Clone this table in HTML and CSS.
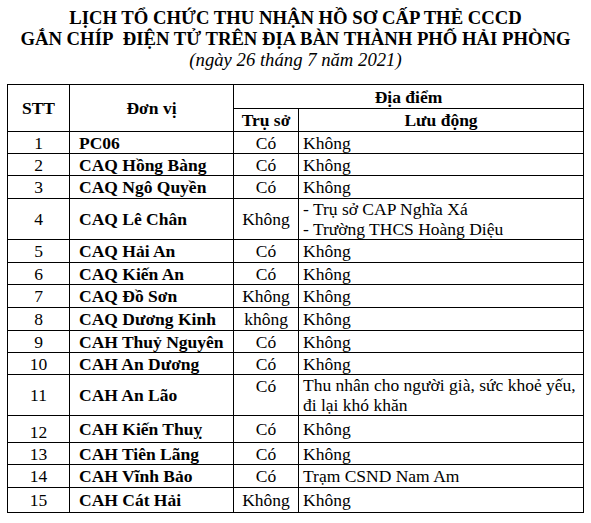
FILE: index.html
```html
<!DOCTYPE html>
<html lang="vi">
<head>
<meta charset="utf-8">
<title>Lịch tổ chức thu nhận hồ sơ cấp thẻ CCCD</title>
<link rel="stylesheet" href="styles.css">
</head>
<body>
<div class="heading">
  <div class="title">LỊCH TỔ CHỨC THU NHẬN HỒ SƠ CẤP THẺ CCCD</div>
  <div class="title">GẮN CHÍP&nbsp; ĐIỆN TỬ TRÊN ĐỊA BÀN THÀNH PHỐ HẢI PHÒNG</div>
  <div class="date">(ngày 26 tháng 7 năm 2021)</div>
</div>
<div class="sched">
  <div class="cell th span-r stt-h">STT</div>
  <div class="cell th span-r">Đơn vị</div>
  <div class="cell th span-c">Địa điểm</div>
  <div class="cell th">Trụ sở</div>
  <div class="cell th">Lưu động</div>

  <div class="cell c">1</div><div class="cell b">PC06</div><div class="cell c">Có</div><div class="cell l">Không</div>
  <div class="cell c">2</div><div class="cell b">CAQ Hồng Bàng</div><div class="cell c">Có</div><div class="cell l">Không</div>
  <div class="cell c">3</div><div class="cell b">CAQ Ngô Quyền</div><div class="cell c">Có</div><div class="cell l">Không</div>
  <div class="cell c">4</div><div class="cell b">CAQ Lê Chân</div><div class="cell c">Không</div><div class="cell l">- Trụ sở CAP Nghĩa Xá<br>- Trường THCS Hoàng Diệu</div>
  <div class="cell c">5</div><div class="cell b">CAQ Hải An</div><div class="cell c">Có</div><div class="cell l">Không</div>
  <div class="cell c">6</div><div class="cell b">CAQ Kiến An</div><div class="cell c">Có</div><div class="cell l">Không</div>
  <div class="cell c">7</div><div class="cell b">CAQ Đồ Sơn</div><div class="cell c">Không</div><div class="cell l">Không</div>
  <div class="cell c">8</div><div class="cell b">CAQ Dương Kinh</div><div class="cell c">không</div><div class="cell l">Không</div>
  <div class="cell c">9</div><div class="cell b">CAH Thuỷ Nguyên</div><div class="cell c">Có</div><div class="cell l">Không</div>
  <div class="cell c">10</div><div class="cell b">CAH An Dương</div><div class="cell c">Có</div><div class="cell l">Không</div>
  <div class="cell c">11</div><div class="cell b">CAH An Lão</div><div class="cell c top">Có</div><div class="cell l">Thu nhân cho người già, sức khoẻ yếu,<br>đi lại khó khăn</div>
  <div class="cell c low">12</div><div class="cell b">CAH Kiến Thuỵ</div><div class="cell c">Có</div><div class="cell l">Không</div>
  <div class="cell c">13</div><div class="cell b">CAH Tiên Lãng</div><div class="cell c">Có</div><div class="cell l">Không</div>
  <div class="cell c">14</div><div class="cell b">CAH Vĩnh Bảo</div><div class="cell c">Có</div><div class="cell l">Trạm CSND Nam Am</div>
  <div class="cell c">15</div><div class="cell b">CAH Cát Hải</div><div class="cell c">Không</div><div class="cell l">Không</div>
</div>
</body>
</html>
```

FILE: styles.css
```css
html, body {
  margin: 0;
  padding: 0;
  background: #ffffff;
  color: #000000;
  font-family: "Liberation Serif", serif;
}

.heading {
  padding-top: 7px;
  text-align: center;
  line-height: 21px;
  font-size: 18.7px;
}

.title {
  font-weight: bold;
}

.date {
  font-style: italic;
}

.sched {
  margin: 14px 0 0 7px;
  width: 575px;
  display: grid;
  grid-template-columns: 61px 163px 64px 284px;
  grid-template-rows: 23px 22px 21px 21px 22px 40px 22px 21px 22px 22px 21px 21px 40px 26px 21px 22px 24px;
  gap: 1px;
  border: 1px solid #000000;
  background: #000000;
  font-family: "Liberation Serif", serif;
  font-size: 17.5px;
  line-height: 20px;
}

.cell {
  background: #ffffff;
  display: flex;
  align-items: center;
  white-space: nowrap;
}

.th {
  font-weight: bold;
  justify-content: center;
}

.span-r {
  grid-row: span 2;
}

.span-c {
  grid-column: span 2;
}

.c {
  justify-content: center;
}

.b {
  font-weight: bold;
  padding-left: 9px;
}

.l {
  padding-left: 4px;
}

.top {
  align-items: flex-start;
  padding-top: 1px;
}

.low {
  padding-top: 5px;
}
```
